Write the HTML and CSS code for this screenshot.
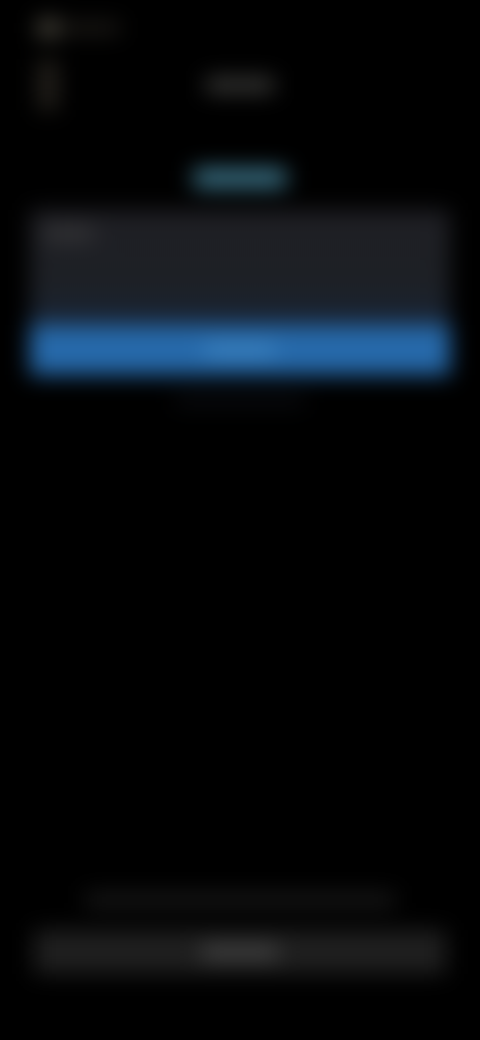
FILE: index.html
```html
<!DOCTYPE html>
<html lang="en">
<head>
    <meta charset="UTF-8">
    <meta name="viewport" content="width=device-width, initial-scale=1.0">
    <title>Screen</title>
    <link rel="stylesheet" href="styles.css">
</head>
<body>
    <div class="screen">
        <!-- text in the reference is not legible, so it is drawn as bars -->
        <div class="head">
            <div class="top">
                <div class="top-line">
                    <div class="top-dot"></div>
                    <div class="top-text"></div>
                </div>
                <div class="top-side"></div>
            </div>
            <div class="title"></div>
        </div>

        <div class="link"></div>

        <div class="card">
            <div class="card-body">
                <div class="card-label"></div>
            </div>
            <div class="card-action">
                <div class="card-action-text"></div>
            </div>
        </div>
        <div class="hint"></div>

        <div class="bottom">
            <div class="note"></div>
            <div class="button">
                <div class="button-text"></div>
            </div>
        </div>
    </div>
</body>
</html>
```

FILE: styles.css
```css
html, body {
    margin: 0;
    padding: 0;
    background-color: #000;
    overflow: hidden;
}
.screen {
    height: 1040px;
    box-sizing: border-box;
    padding: 20px 32px 66px;
    display: flex;
    flex-direction: column;
    align-items: center;
    filter: blur(11px);
}
.head {
    width: 100%;
    display: grid;
    grid-template-columns: 1fr auto 1fr;
    align-items: start;
}
.top {
    margin-left: 6px;
}
.top-line {
    display: flex;
    align-items: center;
    gap: 2px;
}
.top-dot {
    width: 20px;
    height: 16px;
    background-color: #565247;
}
.top-text {
    width: 60px;
    height: 10px;
    background-color: #25221e;
}
.top-side {
    width: 20px;
    height: 50px;
    margin-top: 24px;
    background-color: #24211c;
}
.title {
    width: 68px;
    height: 14px;
    margin-top: 58px;
    background-color: #3e3e3c;
}
.link {
    width: 92px;
    height: 18px;
    margin-top: 59px;
    background-color: #3f7a90;
}
.card {
    width: 420px;
    margin-top: 23px;
    overflow: hidden;
    background: linear-gradient(#1f1f24 0, #1d2025 45%, #12294a 100%);
}
.card-body {
    height: 115px;
    padding: 16px 14px;
    box-sizing: border-box;
}
.card-label {
    width: 50px;
    height: 14px;
    background-color: #363638;
}
.card-action {
    height: 50px;
    display: flex;
    align-items: center;
    justify-content: center;
    background-color: #2669aa;
}
.card-action-text {
    width: 70px;
    height: 12px;
    background-color: #3f86c2;
}
.hint {
    width: 130px;
    height: 10px;
    margin-top: 20px;
    background-color: #0c0f14;
}
.bottom {
    margin-top: auto;
    width: 412px;
    display: flex;
    flex-direction: column;
    align-items: center;
    gap: 23px;
}
.note {
    width: 310px;
    height: 14px;
    background-color: #1a1a1a;
}
.button {
    width: 100%;
    height: 44px;
    display: flex;
    align-items: center;
    justify-content: center;
    background-color: #1f1f1f;
}
.button-text {
    width: 76px;
    height: 14px;
    background-color: #454545;
}
```
